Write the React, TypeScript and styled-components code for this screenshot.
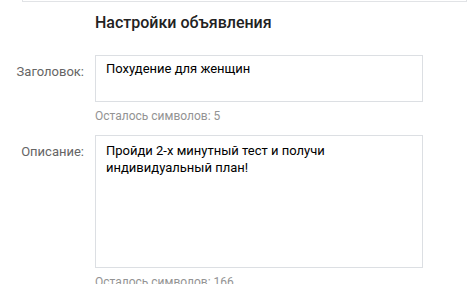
import React from 'react'
import styled, { createGlobalStyle } from 'styled-components'

const GlobalStyle = createGlobalStyle`
  html, body {
    margin: 0;
    padding: 0;
    background: #fff;
  }
  body {
    font-family: Roboto, 'Open Sans', 'Liberation Sans', sans-serif;
    -webkit-font-smoothing: antialiased;
  }
`

const Page = styled.div`
  width: 468px;
  height: 284px;
  overflow: hidden;
  background: #fff;
`

const TopPanel = styled.div`
  box-sizing: border-box;
  height: 2px;
  margin-left: 22px;
  width: 445px;
  border: 1px solid #e1e3e6;
  border-top: none;
`

const Section = styled.section`
  padding-top: 12px;
`

const Title = styled.h2`
  margin: 0 0 23px 95px;
  font-size: 16px;
  line-height: 18px;
  font-weight: 500;
  color: #222;
`

const Row = styled.div`
  display: grid;
  grid-template-columns: 84px 328px;
  column-gap: 11px;
  margin-bottom: 11px;
`

const Label = styled.label`
  padding-top: 9px;
  text-align: right;
  font-size: 13px;
  line-height: 16px;
  color: #656565;
`

const Field = styled.div`
  display: flex;
  flex-direction: column;
`

const TextInput = styled.input`
  box-sizing: border-box;
  width: 100%;
  height: 47px;
  margin: 0;
  padding: 0 10px 20px;
  border: 1px solid #dcdfe3;
  border-radius: 0;
  outline: none;
  font-family: inherit;
  font-size: 13px;
  line-height: 16px;
  color: #000;
  background: #fff;
`

const TextArea = styled.textarea`
  box-sizing: border-box;
  display: block;
  width: 100%;
  height: 133px;
  margin: 0;
  padding: 6px 10px;
  border: 1px solid #dcdfe3;
  border-radius: 0;
  outline: none;
  resize: none;
  overflow: hidden;
  font-family: inherit;
  font-size: 13px;
  line-height: 17px;
  color: #000;
  background: #fff;
`

const Counter = styled.div`
  margin-top: 6px;
  font-size: 12px;
  line-height: 16px;
  color: #939393;
`

export default function App() {
  return (
    <Page>
      <GlobalStyle />
      <TopPanel />
      <Section>
        <Title>Настройки объявления</Title>
        <Row>
          <Label htmlFor="ad-title">Заголовок:</Label>
          <Field>
            <TextInput id="ad-title" defaultValue="Похудение для женщин" />
            <Counter>Осталось символов: 5</Counter>
          </Field>
        </Row>
        <Row>
          <Label htmlFor="ad-text">Описание:</Label>
          <Field>
            <TextArea
              id="ad-text"
              defaultValue="Пройди 2-х минутный тест и получи индивидуальный план!"
            />
            <Counter>Осталось символов: 166</Counter>
          </Field>
        </Row>
      </Section>
    </Page>
  )
}
